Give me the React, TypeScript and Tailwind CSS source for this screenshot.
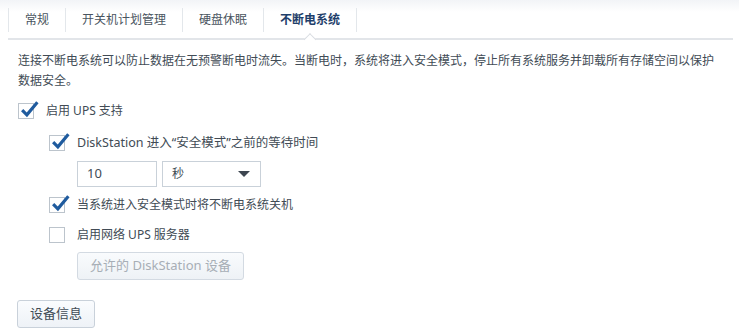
import type { ReactNode } from "react";

const tabs = ["常规", "开关机计划管理", "硬盘休眠", "不断电系统"];

function Checkbox({ checked }: { checked: boolean }) {
  return (
    <div className="relative w-[16px] h-[16px] shrink-0 border border-[#bcc4cc] bg-white">
      {checked && (
        <svg
          className="absolute left-[0px] top-[-6px]"
          width="21"
          height="21"
          viewBox="0 0 20 20"
        >
          <path
            d="M3 11.5 L7.5 16 L17.5 4"
            fill="none"
            stroke="#1f5b9e"
            strokeWidth="3"
            strokeLinejoin="miter"
          />
        </svg>
      )}
    </div>
  );
}

function CheckRow({
  checked,
  children,
  className = "",
}: {
  checked: boolean;
  children: ReactNode;
  className?: string;
}) {
  return (
    <div className={`flex items-center gap-[12px] h-[20px] ${className}`}>
      <Checkbox checked={checked} />
      <span className="text-[12px] text-[#414b55] whitespace-nowrap">{children}</span>
    </div>
  );
}

export default function App() {
  return (
    <div
      className="w-[739px] h-[336px] bg-white overflow-hidden"
      style={{ fontFamily: '"Noto Sans", "Noto Sans CJK SC", sans-serif' }}
    >
      {/* TABS */}
      <div className="bg-gradient-to-b from-[#f2f4f7] to-white to-[30%] pt-[8px]">
        <div className="relative mx-[8px] mr-[6px] pb-[6px] border-b-2 border-[#e2e5e9]">
          <div className="flex h-[24px]">
            {tabs.map((t, i) => {
              const active = i === tabs.length - 1;
              return (
                <div
                  key={t}
                  className={`relative flex items-center px-[16px] border-l border-[#e3e7eb] ${
                    active ? "border-r" : ""
                  }`}
                >
                  <span
                    className={`text-[12px] whitespace-nowrap ${
                      active ? "font-bold text-[#1f3f6b]" : "text-[#4a5560]"
                    }`}
                  >
                    {t}
                  </span>
                  {active && (
                    <div className="absolute left-1/2 -translate-x-1/2 bottom-[-12px] w-[9px] h-[9px] rotate-45 bg-white border-l border-t border-[#d8dce1]" />
                  )}
                </div>
              );
            })}
          </div>
        </div>
      </div>

      {/* CONTENT */}
      <div className="pl-[18px] pr-[20px]">
        <p className="mt-[11px] text-[12px] leading-[20px] text-[#414b55]">
          连接不断电系统可以防止数据在无预警断电时流失。当断电时，系统将进入安全模式，停止所有系统服务并卸载所有存储空间以保护数据安全。
        </p>

        <CheckRow checked className="mt-[10px]">
          启用 UPS 支持
        </CheckRow>

        <div className="pl-[31px]">
          <CheckRow checked className="mt-[12px]">
            <span className="text-[12.5px]">DiskStation 进入“安全模式”之前的等待时间</span>
          </CheckRow>

          <div className="ml-[28px] mt-[8px] flex gap-[5px]">
            <div className="w-[80px] h-[26px] border border-[#c9d1d9] flex items-center px-[9px] text-[13px] text-[#414b55]">
              10
            </div>
            <div className="w-[99px] h-[26px] border border-[#c9d1d9] flex items-center justify-between pl-[9px] pr-[10px] text-[12px] text-[#414b55]">
              <span>秒</span>
              <span className="w-0 h-0 border-l-[6px] border-r-[6px] border-t-[6px] border-l-transparent border-r-transparent border-t-[#3d4650]" />
            </div>
          </div>

          <CheckRow checked className="mt-[8px]">
            当系统进入安全模式时将不断电系统关机
          </CheckRow>

          <CheckRow checked={false} className="mt-[10px]">
            启用网络 UPS 服务器
          </CheckRow>

          <button
            disabled
            className="ml-[28px] mt-[7px] w-[167px] h-[28px] rounded-[3px] border border-[#d3dae2] bg-gradient-to-b from-[#f9fbfd] to-[#eef2f6] text-[13px] text-[#a7aeb6]"
          >
            允许的 DiskStation 设备
          </button>
        </div>

        <button className="-ml-[1px] mt-[20px] w-[78px] h-[28px] rounded-[3px] border border-[#c9d1da] bg-gradient-to-b from-[#fafcfe] to-[#eef2f7] text-[13px] text-[#414b55]">
          设备信息
        </button>
      </div>
    </div>
  );
}
